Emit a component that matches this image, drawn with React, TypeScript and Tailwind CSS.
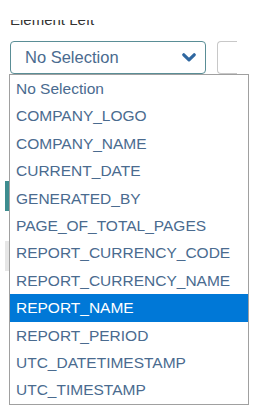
const options = [
  'No Selection',
  'COMPANY_LOGO',
  'COMPANY_NAME',
  'CURRENT_DATE',
  'GENERATED_BY',
  'PAGE_OF_TOTAL_PAGES',
  'REPORT_CURRENCY_CODE',
  'REPORT_CURRENCY_NAME',
  'REPORT_NAME',
  'REPORT_PERIOD',
  'UTC_DATETIMESTAMP',
  'UTC_TIMESTAMP',
];

function Chevron() {
  return (
    <svg width="14" height="9" viewBox="0 0 14 9" className="shrink-0">
      <path d="M1.8 1.8 L7 6.8 L12.2 1.8" fill="none" stroke="#2f67a0" strokeWidth="3.2" strokeLinecap="round" strokeLinejoin="round" />
    </svg>
  );
}

export default function App() {
  const selected = 'REPORT_NAME';

  return (
    <div
      className="relative h-[414px] w-[255px] overflow-hidden bg-white"
      style={{ fontFamily: '"Liberation Sans", Arial, sans-serif' }}
    >
      {/* Field (label is scrolled partly out of view) */}
      <div className="pl-[10px] pt-[20px]">
        <div className="mb-[13px] h-[8px] overflow-hidden">
          <p className="-mt-[9px] text-[15px] leading-[18px] text-[#333]">Element Left</p>
        </div>
        <div className="flex gap-[11px]">
          <div className="flex h-[33px] w-[196px] items-center justify-between rounded-[4px] border border-[#5a8e96] pl-[14px] pr-[9px]">
            <span className="text-[16.5px] text-[#4a6b8f]">No Selection</span>
            <Chevron />
          </div>
          <div className="h-[33px] w-[20px] rounded-l-[4px] border-y border-l border-[#c8c8c8]" />
        </div>
      </div>

      {/* Content behind the list */}
      <div className="mt-[107px] ml-[5px] flex w-[5px] flex-col gap-[30px]">
        <div className="h-[30px] bg-[#3d8c8f]" />
        <div className="h-[30px] bg-[#e6e6e6]" />
      </div>

      {/* Open dropdown */}
      <ul className="absolute left-[9px] top-[74px] w-[240px] border border-[#a0a0a0] bg-white">
        {options.map((o) => (
          <li
            key={o}
            className={
              o === selected
                ? 'flex h-[27.4px] items-center bg-[#0078d7] pl-[6px] text-[15.5px] text-white'
                : 'flex h-[27.4px] items-center pl-[6px] text-[15.5px] text-[#4a6b8f]'
            }
          >
            {o}
          </li>
        ))}
      </ul>
    </div>
  );
}
